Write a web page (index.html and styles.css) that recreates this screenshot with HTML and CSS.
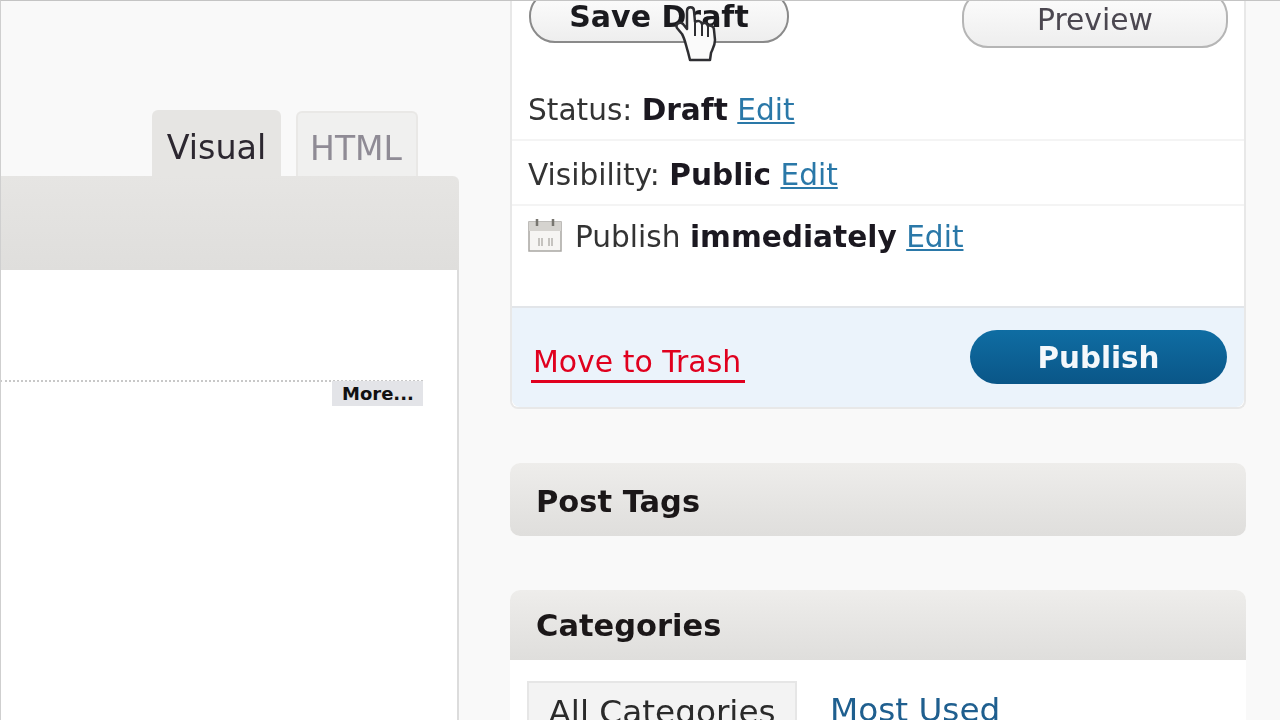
FILE: index.html
```html
<!DOCTYPE html>
<html lang="en">
  <head>
    <meta charset="UTF-8" />
    <title>Edit Post</title>
    <link rel="stylesheet" href="styles.css">
  </head>
  <body>
    <div id="page">
      <!-- Editor -->
      <div id="editor">
        <div class="editor-tabs">
          <a class="editor-tab active">Visual</a>
          <a class="editor-tab">HTML</a>
        </div>
        <div class="editor-toolbar"></div>
        <div class="editor-body">
          <div class="more-line"></div>
          <span class="more-tag">More...</span>
        </div>
      </div>

      <!-- Sidebar -->
      <div id="sidebar">
        <div class="publish-box">
          <div class="save-row">
            <a class="btn btn-save">Save Draft</a>
            <a class="btn btn-preview">Preview</a>
          </div>
          <div class="misc-row row-status">Status: <b>Draft</b> <a class="edit-link">Edit</a></div>
          <div class="misc-row row-visibility">Visibility: <b>Public</b> <a class="edit-link">Edit</a></div>
          <div class="misc-row row-schedule">
            <svg class="cal-icon" width="34" height="34" viewBox="0 0 34 34">
              <rect x="1" y="4" width="32" height="29" fill="#f6f5f3" stroke="#a9a7a3" stroke-width="1.5"/>
              <rect x="1" y="4" width="32" height="9" fill="#d5d3cf"/>
              <path d="M9 1v7M25 1v7" stroke="#77756f" stroke-width="2.5"/>
              <path d="M11 20v8M14 20v8M21 20v8M24 20v8" stroke="#b5b3ae" stroke-width="1.5"/>
            </svg>
            <span>Publish <b>immediately</b> <a class="edit-link">Edit</a></span>
          </div>
          <div class="major-actions">
            <a class="trash-link">Move to Trash</a>
            <a class="btn-publish">Publish</a>
          </div>
        </div>

        <div class="meta-box closed"><h3>Post Tags</h3></div>

        <div class="meta-box">
          <h3>Categories</h3>
          <div class="meta-inner">
            <a class="cat-tab active">All Categories</a>
            <a class="cat-tab">Most Used</a>
          </div>
        </div>
      </div>

      <svg class="hand-cursor" width="46" height="60" viewBox="0 0 46 60">
        <path d="M8 30 L3 24 C1 20 6 17 9 20 L13 25 L13 7 C13 2 20 2 20 7 L21 18 C24 16 27 17 28 20 C30 18 33 19 34 22 C36 21 40 22 40 26 L41 36 C41 42 38 46 37 49 L36 56 L16 56 L14 48 C12 42 11 35 8 30 Z" fill="#fafafa" stroke="#2e2e32" stroke-width="2.500" stroke-linejoin="round"/>
        <path d="M21 19v13M28 21v11M34 23v10" stroke="#2e2e32" stroke-width="2"/>
      </svg>
    </div>
  </body>
</html>
```

FILE: styles.css
```css
html,
body {
  margin: 0;
  padding: 0;
  height: 100%;
  overflow: hidden;
}
body {
  background: #f9f9f9;
  color: #333;
  font: normal 29.6px/1.2 "DejaVu Sans", Sans-Serif;
}
#page {
  position: relative;
  display: flex;
  width: 1280px;
  height: 720px;
  overflow: hidden;
  filter: blur(0.6px);
}
#page::after {
  content: "";
  position: absolute;
  inset: 0;
  border-top: 1px solid #c4c4c4;
  border-left: 1px solid #cfcfcf;
}

/* Editor */
#editor {
  width: 459px;
  flex-shrink: 0;
  display: flex;
  flex-direction: column;
  padding-top: 110px;
  box-sizing: border-box;
}
.editor-tabs {
  display: flex;
  justify-content: flex-end;
  gap: 15px;
  padding-right: 41px;
}
.editor-tab {
  height: 66px;
  box-sizing: border-box;
  padding-top: 18px;
  border-radius: 6px 6px 0 0;
  text-align: center;
  font-size: 33.4px;
  color: #2c2730;
  background: #e6e5e3;
  width: 129px;
}
.editor-tab + .editor-tab {
  width: 122px;
  margin-top: 1px;
  height: 65px;
  font-size: 33px;
  color: #8f8b95;
  background: #f0f0ef;
  border: 2px solid #e9e8e6;
  border-bottom: 0;
  padding: 16px 2px 0 0;
}
.editor-toolbar {
  height: 94px;
  background: linear-gradient(#e6e5e3, #dfdedc);
  border-radius: 0 6px 0 0;
}
.editor-body {
  position: relative;
  flex: 1;
  background: #fff;
  border-right: 2px solid #dcdcdc;
}
.more-line {
  margin-top: 110px;
  margin-right: 34px;
  border-top: 2px dotted #c8c8c8;
}
.more-tag {
  position: absolute;
  top: 111px;
  right: 34px;
  width: 91px;
  height: 25px;
  box-sizing: border-box;
  padding-left: 10px;
  background: #e3e4e8;
  color: #111;
  font-size: 18px;
  line-height: 25px;
  font-weight: bold;
}

/* Sidebar */
#sidebar {
  width: 736px;
  margin-left: 51px;
  flex-shrink: 0;
}
.publish-box {
  background: #fff;
  border: solid #e8e8e8;
  border-width: 0 2px 2px;
  border-radius: 0 0 8px 8px;
}
.save-row {
  display: flex;
  justify-content: space-between;
  align-items: flex-start;
  padding: 0 16px 0 17px;
  height: 86px;
  margin-top: -10px;
}
.btn {
  box-sizing: border-box;
  text-align: center;
  border: 2px solid #8a8a8a;
  border-radius: 26px;
  background: linear-gradient(#fdfdfd, #eeeeee);
}
.btn-save {
  width: 260px;
  height: 53px;
  padding-top: 7px;
  font-weight: bold;
  font-size: 30px;
  color: #1a1a1e;
}
.btn-preview {
  width: 266px;
  height: 58px;
  padding-top: 10px;
  border-color: #b5b5b5;
  color: #4b4750;
  font-size: 29.8px;
}
.misc-row {
  height: 65px;
  box-sizing: border-box;
  padding: 17px 16px 0;
  white-space: nowrap;
}
.misc-row b {
  color: #1b1820;
}
.row-status {
  border-bottom: 2px solid #f4f4f4;
}
.row-visibility {
  border-bottom: 2px solid #f4f4f4;
}
.row-schedule {
  height: 100px;
  display: flex;
  align-items: flex-start;
  gap: 13px;
  padding-top: 14px;
}
.cal-icon {
  flex-shrink: 0;
  margin-top: -2px;
}
.edit-link {
  color: #2a78a8;
  text-decoration: underline;
}
.major-actions {
  display: flex;
  justify-content: space-between;
  align-items: flex-start;
  height: 101px;
  box-sizing: border-box;
  padding: 22px 17px 0 19px;
  background: #ebf3fb;
  border-top: 2px solid #e2e5e9;
  border-radius: 0 0 8px 8px;
}
.trash-link {
  margin-top: 14px;
  padding: 0 4px 0 2px;
  color: #e0001e;
  border-bottom: 3px solid #e0001e;
  font-size: 29.9px;
}
.btn-publish {
  width: 257px;
  height: 54px;
  box-sizing: border-box;
  padding-top: 11px;
  text-align: center;
  border-radius: 27px;
  background: linear-gradient(#0f6da3, #0a5688);
  color: #f4f8fb;
  font-size: 29.4px;
  font-weight: bold;
}
.meta-box {
  margin-top: 54px;
  background: #fff;
  border-radius: 10px 10px 0 0;
}
.meta-box.closed {
  border-radius: 10px;
}
.meta-box h3 {
  margin: 0;
  height: 70px;
  box-sizing: border-box;
  padding: 18px 26px 0;
  font-size: 30.5px;
  color: #1b1718;
  background: linear-gradient(#eeedeb, #dfdedc);
  border-radius: 10px 10px 0 0;
}
.meta-box.closed h3 {
  height: 73px;
  padding-top: 21px;
  border-radius: 10px;
}
.meta-inner {
  display: flex;
  gap: 33px;
  padding: 21px 17px 0;
  height: 60px;
  overflow: hidden;
  font-size: 32.7px;
}
.cat-tab {
  color: #1f5f8f;
  padding-top: 10px;
}
.cat-tab.active {
  width: 270px;
  height: 60px;
  box-sizing: border-box;
  text-align: center;
  color: #2a2a2a;
  background: #f3f3f3;
  border: 2px solid #e6e6e6;
  border-bottom: 0;
}

.hand-cursor {
  position: absolute;
  left: 674px;
  top: 4px;
}
```
